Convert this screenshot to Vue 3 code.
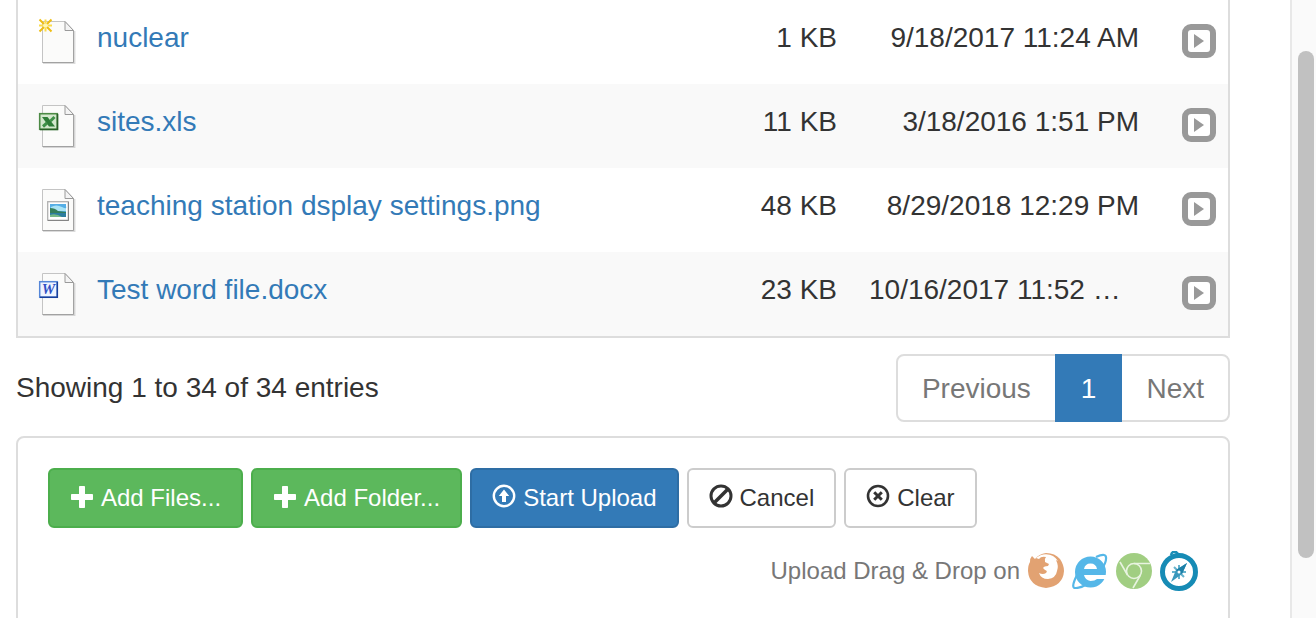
<script setup>
const files = [
  { name: 'nuclear', kind: 'new', size: '1 KB', date: '9/18/2017 11:24 AM' },
  { name: 'sites.xls', kind: 'xls', size: '11 KB', date: '3/18/2016 1:51 PM' },
  { name: 'teaching station dsplay settings.png', kind: 'png', size: '48 KB', date: '8/29/2018 12:29 PM' },
  { name: 'Test word file.docx', kind: 'doc', size: '23 KB', date: '10/16/2017 11:52 …', clipped: true }
]
</script>

<template>
  <div class="shell">
    <main class="content">
      <table class="files">
        <colgroup>
          <col class="col-icon"><col><col class="col-size"><col class="col-date"><col class="col-action">
        </colgroup>
        <tbody>
          <tr v-for="file in files" :key="file.name">
            <td class="icon-cell">
              <svg class="file-icon" viewBox="0 0 40 48" aria-hidden="true">
                <path d="M6 46.200H37.700V14" fill="none" stroke="#000" stroke-opacity=".14" stroke-width="1.500" />
                <path d="M5.500 4.500H28L36.500 13.500V45.500H5.500Z" fill="#fbfbfa" stroke="#c4c4c4" />
                <path d="M5.500 45.500H36.500V13.500" fill="none" stroke="#a2a2a2" />
                <path d="M28 4.500V13.500H36.500Z" fill="#f4f4f4" stroke="#9a9a9a" />
                <g v-if="file.kind === 'new'" fill="none" stroke-width="2">
                  <path d="M8.500 2.500V7M8.500 10V14.500M2 8.500H6.500M10.500 8.500H15" stroke="#fbdc4a" />
                  <path d="M2.500 2.500L7 7M14.500 2.500L10 7M2.500 14.500L7 10M14.500 14.500L10 10" stroke="#eebd13" />
                  <circle cx="8.500" cy="8.500" r="2" fill="#fff7b0" stroke="none" />
                </g>
                <g v-else-if="file.kind === 'xls'">
                  <rect x="2.700" y="12.700" width="17.600" height="15.600" fill="#d3e8cd" stroke="#4c8a45" stroke-width="1.600" />
                  <path d="M5 16H10.500L18 25.500H12Z" fill="#2f7d38" />
                  <path d="M17.500 16L13.500 20M10 22L6 25.500" stroke="#3f9148" stroke-width="3" />
                  <path d="M3 28.500H20.500V13" fill="none" stroke="#285f26" stroke-width="1.600" />
                </g>
                <g v-else-if="file.kind === 'png'">
                  <rect x="10.700" y="16.700" width="20.600" height="18.600" fill="#fff" stroke="#b0b0b0" stroke-width="1.300" />
                  <path d="M11 35.500H31.500V17" fill="none" stroke="#858585" />
                  <rect x="13" y="19" width="16" height="13" fill="#55aee6" />
                  <path d="M14 22Q19 19 25 22T29 21V26H13Z" fill="#a9e3f5" />
                  <path d="M13 23Q18 23 21 26L29 27V29H13Z" fill="#347e5b" />
                  <rect x="13" y="28" width="16" height="4" fill="#2c7da0" />
                  <path d="M13 30Q19 28 25 32H13Z" fill="#75b887" />
                </g>
                <g v-else>
                  <rect x="2.700" y="12.700" width="17.600" height="15.600" fill="#eff4ff" stroke="#5586d8" stroke-width="1.500" />
                  <path d="M3 28.300H20.300V13" fill="none" stroke="#173f9c" stroke-width="1.500" />
                  <text x="11.500" y="25" text-anchor="middle" class="word-mark">W</text>
                </g>
              </svg>
            </td>
            <td class="name-cell"><a href="#">{{ file.name }}</a></td>
            <td class="num">{{ file.size }}</td>
            <td class="num" :class="{ clipped: file.clipped }">{{ file.date }}</td>
            <td class="action-cell">
              <button class="expand" type="button" :aria-label="'Actions for ' + file.name">
                <svg viewBox="0 0 34 34" aria-hidden="true">
                  <rect x="3" y="3" width="28" height="28" rx="6" fill="#fff" stroke="#999" stroke-width="6" />
                  <path d="M12 10L22 17L12 24Z" fill="#999" />
                </svg>
              </button>
            </td>
          </tr>
        </tbody>
      </table>

      <div class="table-foot">
        <p class="info">Showing 1 to 34 of 34 entries</p>
        <nav class="pager" aria-label="Pages">
          <a href="#">Previous</a>
          <a href="#" class="active" aria-current="page">1</a>
          <a href="#">Next</a>
        </nav>
      </div>

      <section class="upload">
        <div class="buttons">
          <button type="button" class="btn green">
            <svg viewBox="0 0 24 24" aria-hidden="true"><path d="M9.800 0h4.400a.8.8 0 0 1 .8.800V8h7.200a.8.8 0 0 1 .8.800v4.400a.8.8 0 0 1-.8.800H15v7.200a.8.8 0 0 1-.8.800H9.800a.8.8 0 0 1-.8-.800V14H1.800a.8.8 0 0 1-.8-.800V8.800A.8.8 0 0 1 1.800 8H9V.8a.8.8 0 0 1 .8-.8Z" fill="currentColor" /></svg>
            <span>Add Files...</span>
          </button>
          <button type="button" class="btn green">
            <svg viewBox="0 0 24 24" aria-hidden="true"><path d="M9.800 0h4.400a.8.8 0 0 1 .8.800V8h7.200a.8.8 0 0 1 .8.800v4.400a.8.8 0 0 1-.8.800H15v7.200a.8.8 0 0 1-.8.800H9.800a.8.8 0 0 1-.8-.800V14H1.800a.8.8 0 0 1-.8-.800V8.800A.8.8 0 0 1 1.800 8H9V.8a.8.8 0 0 1 .8-.8Z" fill="currentColor" /></svg>
            <span>Add Folder...</span>
          </button>
          <button type="button" class="btn blue">
            <svg viewBox="0 0 24 24" aria-hidden="true"><circle cx="12" cy="10" r="10.200" fill="none" stroke="currentColor" stroke-width="2.400" /><path d="M12 3.500L17.200 10H14v6h-4v-6H6.800Z" fill="currentColor" /></svg>
            <span>Start Upload</span>
          </button>
          <button type="button" class="btn white">
            <svg viewBox="0 0 24 24" aria-hidden="true"><circle cx="12" cy="10" r="10" fill="none" stroke="currentColor" stroke-width="3" /><path d="M5.500 16.500L18.500 3.500" stroke="currentColor" stroke-width="3.600" /></svg>
            <span>Cancel</span>
          </button>
          <button type="button" class="btn white">
            <svg viewBox="0 0 24 24" aria-hidden="true"><circle cx="12" cy="10" r="10" fill="none" stroke="currentColor" stroke-width="2.600" /><path d="M8.200 6.200L15.800 13.800M15.800 6.200L8.200 13.800" stroke="currentColor" stroke-width="3" /></svg>
            <span>Clear</span>
          </button>
        </div>
        <div class="support">
          <span>Upload Drag &amp; Drop on</span>
          <svg viewBox="0 0 36 36" aria-hidden="true">
            <path d="M2 9Q2 5 4 3L7 6Q11 1 18 0Q27 0 32 6Q36 12 36 18Q35 33 18 35Q1 33 0 18Q0 12 2 9Z" fill="#e2a272" />
            <path d="M8 5Q12 1.500 18 1.200Q26 1.500 30 8L28 7Q31 13 29 18Q28 25 20 26Q13 26 11 20Q15 22 18 20Q20 18 17 17L15 15Q16 13 20 13L21 11L17 9Q16 6 18 4Q13 3 11 6Z" fill="#fff" />
          </svg>
          <svg viewBox="0 0 36 36" aria-hidden="true">
            <circle cx="18.500" cy="19" r="15.500" fill="#55b7e8" />
            <path d="M12 16Q13 10.500 18.500 10.500T25 16Z" fill="#fff" />
            <path d="M12 22H36V26H25Q23 28 18.500 28Q13 27 12 22Z" fill="#fff" />
            <path d="M5 22Q-2 36 4 35Q9 35 15 31M24 4Q35 -1 34 6Q34 9 31 14" fill="none" stroke="#55b7e8" stroke-width="2.200" />
          </svg>
          <svg viewBox="0 0 36 36" aria-hidden="true">
            <circle cx="18" cy="18" r="18" fill="#a1ce82" />
            <g fill="none" stroke="#e8f3e0" stroke-width="1.600"><circle cx="18" cy="18" r="7.500" /><path d="M18 10.500H34M11.500 22L4 9M24.500 22L17 35" /></g>
          </svg>
          <svg class="compass" viewBox="0 0 38 40" aria-hidden="true">
            <path d="M11 4Q12 0 16 1L18 3" fill="none" stroke="#1b8fb8" stroke-width="2.500" />
            <circle cx="19" cy="21" r="16.500" fill="#fff" stroke="#168bb5" stroke-width="5" />
            <path d="M19 14V28M12 21H26M14 16L24 26" stroke="#67b3cd" stroke-width="2" />
            <path d="M27 12L22 23L11 31L16 19Z" fill="#3a98bc" />
            <path d="M27 12L16 19L22 23Z" fill="#1d80a8" />
            <circle cx="19" cy="21" r="1.500" fill="#fff" />
          </svg>
        </div>
      </section>
    </main>
    <div class="scrollbar" aria-hidden="true"><div class="thumb"></div></div>
  </div>
</template>

<style>
body { margin: 0; background: #fff; }
</style>

<style scoped>
.shell {
  display: flex;
  height: 100vh;
  overflow: hidden;
  box-sizing: border-box;
  font-family: "Liberation Sans", Arial, sans-serif;
  font-size: 28px;
  line-height: 40px;
  color: #333;
}
.content { flex: 1; min-width: 0; padding: 0 60px 0 16px; }
.files {
  width: 100%;
  box-sizing: border-box;
  table-layout: fixed;
  border-spacing: 0;
  border: 2px solid #ddd;
  border-top: 0;
}
.col-icon { width: 64px; }
.col-size { width: 160px; }
.col-date { width: 302px; }
.col-action { width: 73px; }
.files td { height: 84px; box-sizing: border-box; padding: 18px 16px 26px; vertical-align: top; white-space: nowrap; }
.files tr:nth-child(even) { background: #f9f9f9; }
.files .icon-cell { padding: 17px 0 0 19px; }
.file-icon { display: block; width: 40px; height: 48px; }
.word-mark { font: italic bold 15px "Liberation Serif", serif; fill: #2f4fc4; }
a { color: #337ab7; text-decoration: none; }
.files .name-cell { padding-left: 15px; }
.num { text-align: right; }
.clipped { text-align: left; }
.files .action-cell { padding: 24px 12px 0 0; }
.expand { display: block; margin-left: auto; width: 34px; height: 34px; padding: 0; border: 0; background: none; }
.expand svg { display: block; width: 34px; height: 34px; }
.table-foot { display: flex; justify-content: space-between; padding: 16px 0 14px; }
.info { margin: 0; padding-top: 14px; }
.pager { display: flex; }
.pager a { padding: 13px 24px 11px; border: 2px solid #ddd; margin-left: -2px; color: #777; background: #fff; }
.pager a:first-child { border-radius: 8px 0 0 8px; }
.pager a:last-child { border-radius: 0 8px 8px 0; }
.pager .active { position: relative; z-index: 1; color: #fff; background: #337ab7; border-color: #337ab7; }
.upload { border: 2px solid #ddd; border-radius: 8px; padding: 30px; }
.buttons { display: flex; gap: 8px; }
.btn {
  display: flex;
  align-items: center;
  gap: 7px;
  padding: 10px 20px;
  border: 2px solid;
  border-radius: 6px;
  font: inherit;
  font-size: 24px;
  line-height: 36px;
  white-space: nowrap;
}
.btn svg { width: 24px; height: 24px; overflow: visible; }
.green { color: #fff; background: #5cb85c; border-color: #4cae4c; }
.blue { color: #fff; background: #337ab7; border-color: #2e6da4; }
.white { color: #333; background: #fff; border-color: #ccc; }
.support { display: flex; justify-content: flex-end; align-items: center; gap: 8px; margin-top: 23px; margin-bottom: 60px; font-size: 24px; color: #777; }
.support svg { width: 36px; height: 36px; }
.support .compass { width: 38px; height: 40px; }
.scrollbar { width: 26px; box-sizing: border-box; border-left: 2px solid #e8e8e8; background: #fafafa; padding: 51px 2px 60px 6px; }
.thumb { height: 100%; border-radius: 8px; background: #c1c1c1; }
</style>
